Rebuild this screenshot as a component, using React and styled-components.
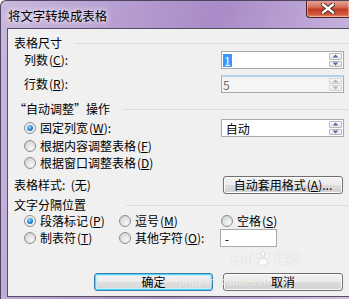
import React from "react";
import styled, { createGlobalStyle, css } from "styled-components";

const GlobalStyle = createGlobalStyle`
	html, body {
		margin: 0;
		padding: 0;
		width: 349px;
		height: 299px;
		overflow: hidden;
		background: #ffffff;
	}
	body {
		font-family: "Noto Sans CJK SC", "Liberation Sans", sans-serif;
		font-size: 12px;
		color: #000;
	}
`;

const Window = styled.div`
	position: relative;
	width: 349px;
	height: 299px;
	box-sizing: border-box;
	display: flex;
	flex-direction: column;
	padding: 0 0 2px 6px;
	border-left: 1px solid #4e4560;
	border-top: 1px solid #4e4560;
	border-top-left-radius: 6px;
	background: linear-gradient(100deg, #c9b8dd 0%, #b9a1d3 25%, #a98bc7 55%, #bca5d6 78%, #d0bfe2 100%);
	overflow: hidden;
`;

const TitleBar = styled.div`
	height: 27px;
	display: flex;
	align-items: flex-start;
	flex: none;
`;

const Title = styled.div`
	margin-top: 8px;
	margin-left: 1px;
	font-size: 12.4px;
	line-height: 14px;
	text-shadow: 0 0 5px rgba(255, 255, 255, 0.95), 0 0 9px rgba(255, 255, 255, 0.8);
`;

const CloseButton = styled.div`
	margin-left: auto;
	margin-top: -1px;
	width: 43px;
	height: 18px;
	box-sizing: border-box;
	border: 1px solid #4a2620;
	border-top: none;
	border-right: none;
	border-bottom-left-radius: 4px;
	background: linear-gradient(#e9a89a 0%, #d7725f 40%, #c23b25 55%, #cf5a3e 85%, #e7907a 100%);
	box-shadow: inset 0 0 0 1px rgba(255, 210, 200, 0.5);
	display: flex;
	align-items: center;
	justify-content: center;
`;

const Client = styled.div`
	flex: 1;
	display: flex;
	flex-direction: column;
	background: #f0f0f0;
	border: 1px solid #545064;
	border-right: none;
	padding: 0 5px 0 6px;
`;

const GroupHeader = styled.div`
	height: 14px;
	margin-top: ${(p) => p.$top}px;
	display: flex;
	align-items: center;
	line-height: 14px;
	white-space: nowrap;
	&::after {
		content: "";
		flex: 1;
		height: 1px;
		margin-left: ${(p) => p.$gap}px;
		margin-right: -5px;
		background: #d5dfe5;
	}
`;

const Row = styled.div`
	height: ${(p) => p.$h || 18}px;
	margin-top: ${(p) => p.$top || 0}px;
	padding-left: ${(p) => (p.$flush ? 0 : 10)}px;
	display: flex;
	align-items: center;
	line-height: 14px;
	white-space: nowrap;
`;

const RadioGrid = styled.div`
	height: ${(p) => p.$h}px;
	padding-left: 10px;
	display: grid;
	grid-template-columns: 95px 102px 1fr;
	align-items: center;
	line-height: 14px;
	white-space: nowrap;
`;

const Label = styled.span`
	display: inline-flex;
	align-items: center;
`;

const Field = styled.div`
	width: ${(p) => p.$w}px;
	height: 18px;
	margin-left: ${(p) => (p.$auto ? "auto" : `${p.$ml || 0}px`)};
	box-sizing: border-box;
	border: 1px solid #a9a9a9;
	background: #ffffff;
	display: flex;
	align-items: stretch;
	${(p) =>
		p.$disabled &&
		css`
			border-top: 2px solid #b7d0e9;
			background: #f5f5f5;
			color: #6d6d6d;
		`}
`;

const FieldText = styled.div`
	flex: 1;
	display: flex;
	align-items: center;
	padding-left: 1px;
	line-height: 13px;
`;

const Selected = styled.span`
	background: #3399ff;
	color: #ffffff;
	padding: 0 1px;
	line-height: 13px;
`;

const Spin = styled.div`
	width: 15px;
	display: flex;
	flex-direction: column;
	padding: 1px;
	box-sizing: border-box;
	gap: 1px;
`;

const SpinButton = styled.div`
	flex: 1;
	display: flex;
	align-items: center;
	justify-content: center;
	border: 1px solid ${(p) => (p.$disabled ? "#d4d4d4" : "#b8b8b8")};
	border-radius: 1px;
	background: linear-gradient(#fbfbfb, #e6e6e6);
`;

const Button = styled.div`
	width: ${(p) => p.$w}px;
	height: 18px;
	margin-left: ${(p) => (p.$auto ? "auto" : "0")};
	margin-right: ${(p) => p.$mr || 0}px;
	box-sizing: border-box;
	border: 1px solid #707070;
	border-radius: 3px;
	background: linear-gradient(#f2f2f2 0%, #ebebeb 49%, #dddddd 51%, #cfcfcf 100%);
	box-shadow: inset 0 0 0 1px #fbfbfb;
	display: flex;
	align-items: center;
	justify-content: center;
	line-height: 14px;
	white-space: nowrap;
	${(p) =>
		p.$default &&
		css`
			border-color: #3c7fb1;
			background: linear-gradient(#f4f4f4 0%, #ececec 49%, #e0e0e0 51%, #d6d6d6 100%);
			box-shadow: inset 0 0 0 1px #52d6f8, inset 0 0 0 2px #c8eefb;
		`}
`;

const ButtonRow = styled.div`
	margin-top: 26px;
	display: flex;
	justify-content: flex-end;
	gap: 10px;
	padding-right: 1px;
`;

const RadioCircle = styled.span`
	width: 12px;
	height: 12px;
	margin-right: 4px;
	flex: none;
	box-sizing: border-box;
	border-radius: 50%;
	border: 1px solid #8c8e90;
	background: radial-gradient(circle at 65% 70%, #f7f7f7 0%, #e3e3e3 45%, #c9c9c9 100%);
	display: inline-flex;
	align-items: center;
	justify-content: center;
	${(p) =>
		p.$checked &&
		css`
			background: radial-gradient(circle, #ffffff 0%, #e8eef2 70%, #cfd5da 100%);
			&::after {
				content: "";
				width: 6px;
				height: 6px;
				border-radius: 50%;
				background: radial-gradient(circle at 40% 35%, #a9e1ff 0%, #2f8fdc 45%, #0b3d7c 100%);
			}
		`}
`;

const Mnemonic = styled.span`
	margin-left: 1px;
	& u {
		text-underline-offset: 1px;
	}
`;

/* baidu watermark lies over the dialog */
const Watermark = styled.div`
	position: absolute;
	left: 178px;
	top: 248px;
	display: flex;
	flex-direction: column;
	align-items: flex-start;
	pointer-events: none;
	color: rgba(255, 255, 255, 0.8);
	text-shadow: 0 0 1px rgba(120, 120, 120, 0.35);
	font-family: "Liberation Sans", "Noto Sans CJK SC", sans-serif;
`;

const WatermarkLogo = styled.div`
	display: flex;
	align-items: center;
	margin-left: 52px;
	font-weight: bold;
	font-size: 15px;
	line-height: 20px;
	gap: 1px;
`;

const WatermarkCn = styled.span`
	font-size: 13px;
	margin-left: 2px;
`;

const WatermarkUrl = styled.div`
	font-size: 11px;
	line-height: 14px;
	margin-top: 5px;
	letter-spacing: 0.3px;
`;

const Mark = ({ children, k }) => (
	<Mnemonic>
		(<u>{k}</u>){children}
	</Mnemonic>
);

const Arrow = ({ up, disabled }) => (
	<svg width="7" height="4" viewBox="0 0 7 4">
		<path
			d={up ? "M0.5 3.5 L3.5 0.5 L6.5 3.5 Z" : "M0.5 0.5 L3.5 3.5 L6.5 0.5 Z"}
			fill={disabled ? "#b5b5b5" : "#4d6aa4"}
		/>
	</svg>
);

const SpinBox = ({ children, disabled, w = 123 }) => (
	<Field $w={w} $auto $disabled={disabled}>
		<FieldText>{children}</FieldText>
		<Spin>
			<SpinButton $disabled={disabled}>
				<Arrow up disabled={disabled} />
			</SpinButton>
			<SpinButton $disabled={disabled}>
				<Arrow disabled={disabled} />
			</SpinButton>
		</Spin>
	</Field>
);

const Radio = ({ checked, children }) => (
	<Label>
		<RadioCircle $checked={checked} />
		{children}
	</Label>
);

const CloseIcon = () => (
	<svg width="14" height="11" viewBox="0 0 14 11">
		<path d="M2 1.5 L12 9.5 M12 1.5 L2 9.5" stroke="#3a1c16" strokeWidth="4.2" strokeLinecap="square" />
		<path d="M2 1.5 L12 9.5 M12 1.5 L2 9.5" stroke="#ffffff" strokeWidth="2.4" strokeLinecap="square" />
	</svg>
);

const Paw = () => (
	<svg width="16" height="16" viewBox="0 0 16 16">
		<g fill="rgba(255,255,255,0.85)" stroke="rgba(140,140,140,0.35)" strokeWidth="0.6">
			<ellipse cx="4" cy="5" rx="1.8" ry="2.3" />
			<ellipse cx="8" cy="3" rx="1.8" ry="2.3" />
			<ellipse cx="12" cy="5" rx="1.8" ry="2.3" />
			<path d="M3.5 13 C3.5 9 6 7.5 8 7.5 C10 7.5 12.5 9 12.5 13 C10 14.5 6 14.5 3.5 13 Z" />
		</g>
	</svg>
);

export default function App() {
	return (
		<>
			<GlobalStyle />
			<Window>
				<TitleBar>
					<Title>将文字转换成表格</Title>
					<CloseButton>
						<CloseIcon />
					</CloseButton>
				</TitleBar>
				<Client>
					<GroupHeader $top={7} $gap={12}>表格尺寸</GroupHeader>
					<Row $top={1}>
						列数<Mark k="C">:</Mark>
						<SpinBox>
							<Selected>1</Selected>
						</SpinBox>
					</Row>
					<Row $top={6}>
						行数<Mark k="R">:</Mark>
						<SpinBox disabled>5</SpinBox>
					</Row>

					<GroupHeader $top={9} $gap={12}>“自动调整”操作</GroupHeader>
					<Row $top={3}>
						<Radio checked>
							固定列宽<Mark k="W">:</Mark>
						</Radio>
						<SpinBox>&nbsp;自动</SpinBox>
					</Row>
					<Row $h={17}>
						<Radio>
							根据内容调整表格<Mark k="F" />
						</Radio>
					</Row>
					<Row $h={17}>
						<Radio>
							根据窗口调整表格<Mark k="D" />
						</Radio>
					</Row>

					<Row $top={5} $flush>
						表格样式:&nbsp;&nbsp;(无)
						<Button $w={120} $auto $mr={1}>
							自动套用格式<Mark k="A">...</Mark>
						</Button>
					</Row>

					<GroupHeader $top={4} $gap={40}>文字分隔位置</GroupHeader>
					<RadioGrid $h={17}>
						<Radio checked>
							段落标记<Mark k="P" />
						</Radio>
						<Radio>
							逗号<Mark k="M" />
						</Radio>
						<Radio>
							空格<Mark k="S" />
						</Radio>
					</RadioGrid>
					<RadioGrid $h={18}>
						<Radio>
							制表符<Mark k="T" />
						</Radio>
						<Radio>
							其他字符<Mark k="O">:</Mark>
						</Radio>
						<Field $w={57} $ml={-1}>
							<FieldText>&nbsp;-</FieldText>
						</Field>
					</RadioGrid>

					<ButtonRow>
						<Button $w={119} $default>
							确定
						</Button>
						<Button $w={120}>取消</Button>
					</ButtonRow>
				</Client>
				<Watermark>
					<WatermarkLogo>
						Bai
						<Paw />
						<WatermarkCn>经验</WatermarkCn>
					</WatermarkLogo>
					<WatermarkUrl>jingyan.baidu.com</WatermarkUrl>
				</Watermark>
			</Window>
		</>
	);
}
